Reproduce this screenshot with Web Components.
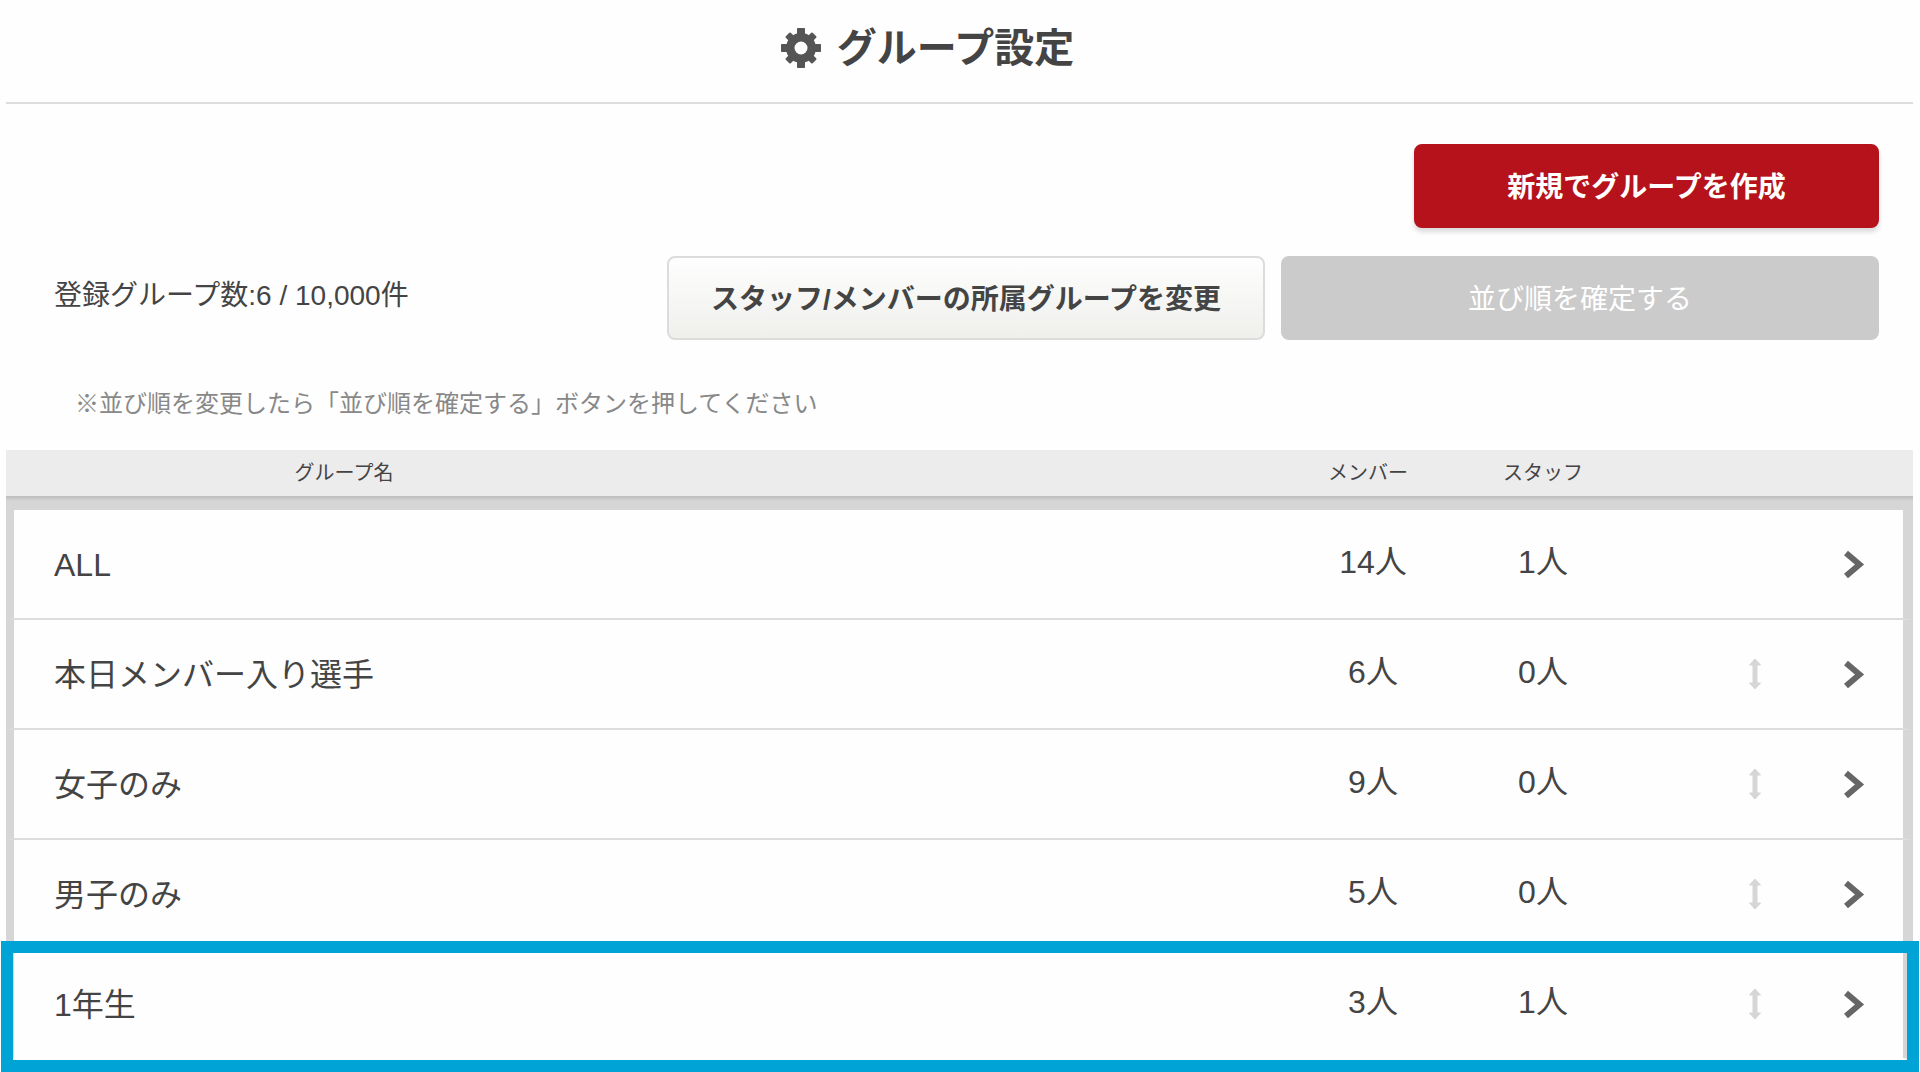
<!DOCTYPE html>
<html lang="ja">
<head>
<meta charset="utf-8">
<title>グループ設定</title>
<style>
  body {
    margin: 0;
    background: #fefefe;
    color: #444;
    font-family: "Liberation Sans", "Noto Sans CJK JP", sans-serif;
    font-size: 28px;
    line-height: 40px;
  }
</style>
</head>
<body>
<group-settings-page>
  <page-title slot="title">グループ設定</page-title>
  <action-button slot="create" variant="primary">新規でグループを作成</action-button>
  <span slot="count">登録グループ数:6 / 10,000件</span>
  <action-button slot="actions">スタッフ/メンバーの所属グループを変更</action-button>
  <action-button slot="actions" variant="muted" disabled>並び順を確定する</action-button>
  <span slot="note">※並び順を変更したら「並び順を確定する」ボタンを押してください</span>
  <group-table slot="table"></group-table>
</group-settings-page>

<script>
const define = (name, html, init) => {
  const template = document.createElement('template');
  template.innerHTML = html;
  customElements.define(name, class extends HTMLElement {
    constructor() {
      super();
      this.attachShadow({ mode: 'open' }).append(template.content.cloneNode(true));
    }
    connectedCallback() {
      if (init) init(this, this.shadowRoot);
    }
  });
};

define('gear-icon', `
  <style>:host { display: block; width: 40px; height: 40px; } svg { display: block; }</style>
  <svg width="40" height="40" viewBox="-20 -20 40 40" fill="#555" stroke="#555" stroke-linejoin="round" aria-hidden="true">
    <circle r="10.75" fill="none" stroke-width="8.500"/>
    <path d="M-3.500-19.500H3.500V-13H-3.500zM-3.500 19.500H3.500V13H-3.500zM-19.500-3.500V3.500H-13V-3.500zM19.500-3.500V3.500H13V-3.500z"/>
    <path transform="rotate(45)" stroke-width="2" d="M-2.500-18H2.500V-13H-2.500zM-2.500 18H2.500V13H-2.500zM-18-2.500V2.500H-13V-2.500zM18-2.500V2.500H13V-2.500z"/>
  </svg>`);

define('move-icon', `
  <style>:host { display: block; width: 14px; height: 32px; } svg { display: block; }</style>
  <svg width="14" height="32" viewBox="0 0 14 32" fill="#d6d6d6" stroke="#d6d6d6" stroke-linejoin="round" aria-hidden="true">
    <path d="M7 1L12.500 7H9V25H12.500L7 31L1.500 25H5V7H1.500z"/>
  </svg>`);

define('chevron-icon', `
  <style>:host { display: block; width: 22px; height: 28px; } svg { display: block; }</style>
  <svg width="22" height="28" viewBox="0 0 22 28" fill="none" stroke="#666" stroke-width="6" aria-hidden="true">
    <path d="M2 3L15.500 14.500L2 26"/>
  </svg>`);

define('page-title', `
  <style>
    :host { display: block; border-bottom: 2px solid #dcdcdf; padding: 18px 64px 24px 0; }
    h1 { display: flex; justify-content: center; align-items: center; gap: 16px; margin: 0;
         font-size: 40px; line-height: 60px; font-weight: bold; }
  </style>
  <h1><gear-icon></gear-icon><slot></slot></h1>`);

define('action-button', `
  <style>
    :host { display: block; }
    button { display: block; width: 100%; height: 84px; border: 2px solid #dcdcdc; border-radius: 8px;
             background: linear-gradient(#fefefe, #efefec); color: #444;
             font: bold 28px/40px "Liberation Sans", "Noto Sans CJK JP", sans-serif; padding: 4px 0 0; }
    :host([variant=primary]) button { background: #b6121b; border-color: #b6121b; color: #fff;
             box-shadow: 0 4px 5px rgba(0, 0, 0, .14); }
    :host([variant=muted]) button { background: #cbcbcb; border-color: #cbcbcb; color: #fff; font-weight: normal; }
  </style>
  <button type="button"><slot></slot></button>`,
  (el, root) => { root.querySelector('button').disabled = el.hasAttribute('disabled'); });

define('group-settings-page', `
  <style>
    :host { display: block; padding: 0 7px 12px 6px; }
    .tools { display: grid; gap: 28px; padding: 40px 34px 0 48px; }
    .create { display: flex; justify-content: flex-end; }
    .create ::slotted(*) { flex: 0 1 465px; }
    .row { display: flex; justify-content: space-between; align-items: center; gap: 16px; }
    .count { padding-bottom: 4px; white-space: nowrap; }
    .actions { display: flex; flex: 0 1 1212px; gap: 16px; }
    .actions ::slotted(*) { flex: 1 1 0; }
    .note { margin: 0; padding: 44px 69px 26px; font-size: 24px; color: #888; }
  </style>
  <main>
    <slot name="title"></slot>
    <div class="tools">
      <div class="create"><slot name="create"></slot></div>
      <div class="row">
        <div class="count"><slot name="count"></slot></div>
        <div class="actions"><slot name="actions"></slot></div>
      </div>
    </div>
    <p class="note"><slot name="note"></slot></p>
    <slot name="table"></slot>
  </main>`);

define('group-table', `
  <style>
    :host { display: block; }
    table { width: 100%; table-layout: fixed; border-collapse: separate; border-spacing: 0; }
    th, td { box-sizing: border-box; padding: 0; }
    th { height: 60px; padding-bottom: 14px; font-size: 20px; line-height: 28px; font-weight: normal; }
    th.member { padding-right: 10px; }
    thead tr { background: linear-gradient(#ececec 46px, #bebebe 46px, #c6c6c6 48px, #d6d6d6 51px); }
    td { height: 110px; border-bottom: 2px solid #dcdcdc; background: #fefefe;
         font-size: 32px; line-height: 44px; text-align: center; }
    td:first-child { border-left: 8px solid #d6d6d6; padding: 2px 0 0 40px; text-align: left; }
    td:last-child { border-right: 10px solid #d6d6d6; }
    .num { padding-bottom: 5px; }
    button { display: block; margin: 0 44px 0 auto; border: 0; padding: 0; background: none; cursor: grab; }
    a { display: block; width: 22px; margin: 0 auto; }
    tr.current { position: relative; }
    tr.current td { border-bottom-color: transparent; }
    tr.current td:last-child::after { content: ""; position: absolute; inset: -9px -6px -12px -5px;
         border: 12px solid #00a3d5; pointer-events: none; }
    .w-name { width: 676px; } .w-member { width: 176px; } .w-staff { width: 164px; }
    .w-move { width: 181px; } .w-open { width: 107px; }
  </style>
  <table>
    <colgroup><col class="w-name"><col><col class="w-member"><col class="w-staff"><col class="w-move"><col class="w-open"></colgroup>
    <thead><tr>
      <th scope="col">グループ名</th><th></th><th scope="col" class="member">メンバー</th><th scope="col">スタッフ</th><th></th><th></th>
    </tr></thead>
    <tbody></tbody>
  </table>`,
  (el, root) => {
    const groups = [
      { name: 'ALL', members: 14, staff: 1, fixed: true },
      { name: '本日メンバー入り選手', members: 6, staff: 0 },
      { name: '女子のみ', members: 9, staff: 0 },
      { name: '男子のみ', members: 5, staff: 0 },
      { name: '1年生', members: 3, staff: 1, current: true },
    ];
    root.querySelector('tbody').innerHTML = groups.map(g => `
      <tr${g.current ? ' class="current"' : ''}>
        <td colspan="2">${g.name}</td>
        <td class="num">${g.members}人</td>
        <td class="num">${g.staff}人</td>
        <td>${g.fixed ? '' : '<button type="button" aria-label="並び替え"><move-icon></move-icon></button>'}</td>
        <td><a href="#" aria-label="${g.name}"><chevron-icon></chevron-icon></a></td>
      </tr>`).join('');
  });
</script>
</body>
</html>
